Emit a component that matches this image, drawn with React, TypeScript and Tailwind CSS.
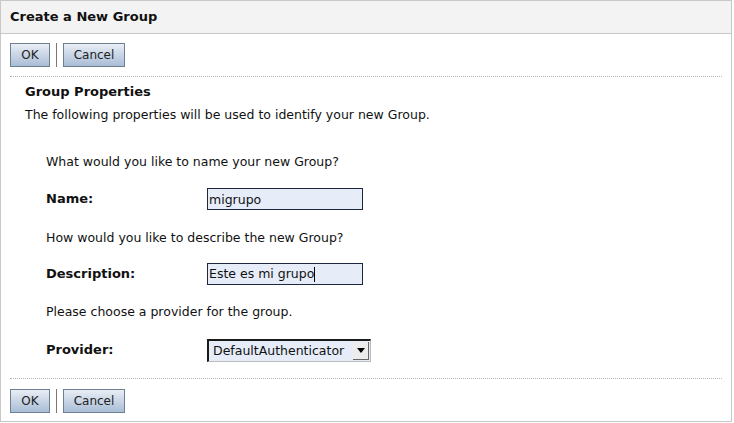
import React from 'react';

const Btn: React.FC<{ label: string; w: string }> = ({ label, w }) => (
  <button
    className={`${w} h-[24px] border border-[#6f7f93] bg-gradient-to-b from-[#e9eef5] to-[#a9bdd6] text-[12px] text-[#222] leading-none`}
  >
    {label}
  </button>
);

const ButtonBar: React.FC = () => (
  <div className="flex items-center px-[9px]">
    <Btn label="OK" w="w-[40px]" />
    <div className="w-px h-[24px] bg-[#777] mx-[6px]" />
    <Btn label="Cancel" w="w-[62px]" />
  </div>
);

const inputFont = { fontFamily: '"DejaVu Sans", sans-serif' };

const App: React.FC = () => {
  return (
    <div className="w-[732px] h-[422px] border border-[#c8c8c8] bg-white text-[12.5px] text-[#111]" style={inputFont}>
      {/* header */}
      <div className="h-[33px] bg-[#f3f3f3] border-b border-[#c8c8c8] flex items-center px-[9px]">
        <h1 className="font-bold text-[13px]">Create a New Group</h1>
      </div>

      <div className="pt-[9px]">
        <ButtonBar />
      </div>

      <div className="mx-[9px] mt-[9px] border-t border-dotted border-[#b5b5b5]" />

      <div className="px-[24px] pt-[5px]">
        <h2 className="font-bold text-[13px] h-[20px] leading-[20px]">Group Properties</h2>
        <p className="h-[26px] leading-[26px]">The following properties will be used to identify your new Group.</p>
      </div>

      <div className="pl-[45px] pt-[21px]">
        <div className="h-[26px] leading-[26px]">What would you like to name your new Group?</div>
        <div className="flex items-center h-[48px]">
          <label className="w-[161px] font-bold text-[13px]">Name:</label>
          <input
            defaultValue="migrupo"
            className="w-[156px] h-[22px] border border-[#1d2740] bg-[#e6edf9] px-[1px] text-[12.5px] outline-none"
            style={inputFont}
          />
        </div>
        <div className="h-[30px] leading-[30px]">How would you like to describe the new Group?</div>
        <div className="flex items-center h-[42px]">
          <label className="w-[161px] font-bold text-[13px]">Description:</label>
          <div className="w-[156px] h-[22px] border border-[#1d2740] bg-[#e6edf9] px-[1px] flex items-center">
            <span>Este es mi grupo</span>
            <span className="w-px h-[15px] bg-black" />
          </div>
        </div>
        <div className="h-[34px] leading-[34px]">Please choose a provider for the group.</div>
        <div className="flex items-center h-[42px]">
          <label className="w-[161px] font-bold text-[13px]">Provider:</label>
          <div className="w-[164px] h-[23px] flex border-t-2 border-l-2 border-[#1a1a1a] border-r border-b border-r-[#bbb] border-b-[#bbb] bg-[#e6edf9]">
            <span className="flex-1 pl-[4px] leading-[20px]">DefaultAuthenticator</span>
            <span className="w-[16px] my-[1px] mr-[1px] bg-[#ececec] border-r border-b border-[#666] flex items-center justify-center">
              <svg width="8" height="5" viewBox="0 0 8 5"><path d="M0 0h8L4 5z" fill="#000" /></svg>
            </span>
          </div>
        </div>
      </div>

      <div className="mx-[9px] mt-[7px] border-t border-dotted border-[#b5b5b5]" />

      <div className="pt-[10px]">
        <ButtonBar />
      </div>
    </div>
  );
};

export default App;
